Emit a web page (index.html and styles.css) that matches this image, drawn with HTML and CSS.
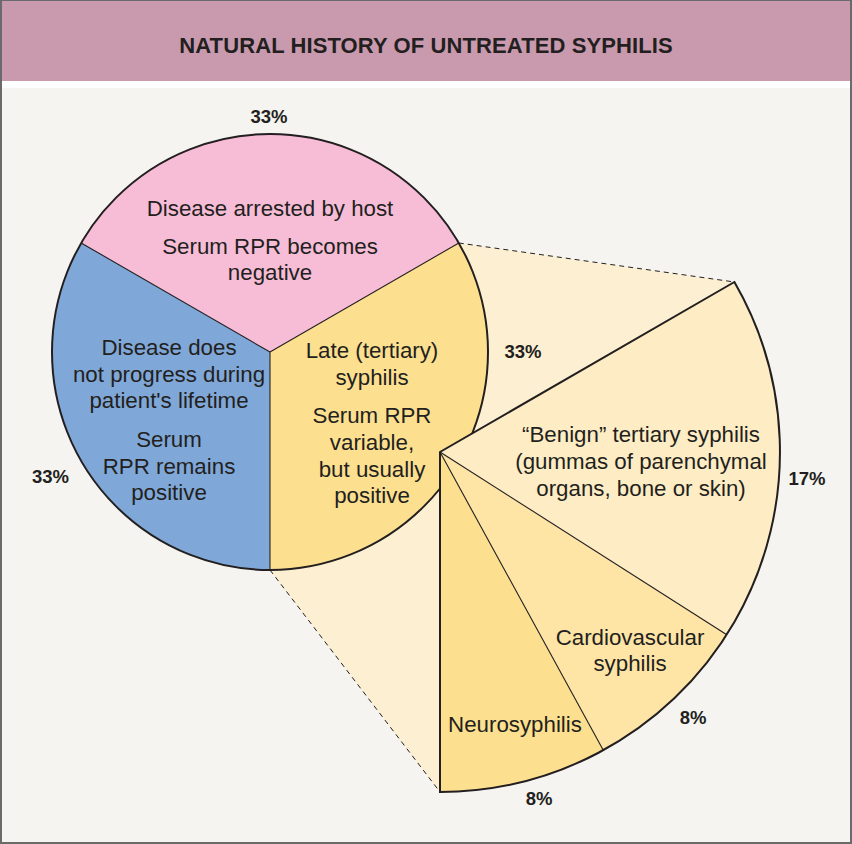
FILE: index.html
```html
<!DOCTYPE html>
<html lang="en">
<head>
<meta charset="utf-8">
<title>Natural history of untreated syphilis</title>
<link rel="stylesheet" href="styles.css">
</head>
<body>
<div class="figure">
  <header class="fig-header">
    <h1 class="fig-title">NATURAL HISTORY OF UNTREATED SYPHILIS</h1>
  </header>
  <div class="fig-gap"></div>
  <div class="fig-canvas">
    <svg class="chart" width="848" height="754" viewBox="2 88 848 754" xmlns="http://www.w3.org/2000/svg">
      <!-- projection shading -->
      <polygon class="proj" points="458.8,243 734.4,282 440,452 440,792 270,570"/>
      <line class="dash" x1="458.8" y1="243" x2="734.4" y2="282"/>
      <line class="dash" x1="270" y1="570" x2="440" y2="792"/>

      <!-- main pie -->
      <path class="s-pink" d="M270,352 L81.2,243 A218,218 0 0 1 458.8,243 Z"/>
      <path class="s-yellow" d="M270,352 L458.8,243 A218,218 0 0 1 270,570 Z"/>
      <path class="s-blue" d="M270,352 L270,570 A218,218 0 0 1 81.2,243 Z"/>
      <line class="thin" x1="270" y1="352" x2="81.2" y2="243"/>
      <line class="thin" x1="270" y1="352" x2="458.8" y2="243"/>
      <line class="thin" x1="270" y1="352" x2="270" y2="570"/>
      <circle class="outline" cx="270" cy="352" r="218"/>

      <!-- exploded sector -->
      <path class="s-benign" d="M440,452 L734.4,282 A340,340 0 0 1 726.8,634.7 Z"/>
      <path class="s-cardio" d="M440,452 L726.8,634.7 A340,340 0 0 1 603.3,750.2 Z"/>
      <path class="s-neuro" d="M440,452 L603.3,750.2 A340,340 0 0 1 440,792 Z"/>
      <line class="thin" x1="440" y1="452" x2="726.8" y2="634.7"/>
      <line class="thin" x1="440" y1="452" x2="603.3" y2="750.2"/>
      <path class="outline" d="M440,452 L734.4,282 A340,340 0 0 1 440,792 Z"/>

      <!-- labels -->
      <g class="lbl">
        <text x="270" y="216">Disease arrested by host</text>
        <text x="270" y="254">Serum RPR becomes</text>
        <text x="270" y="280">negative</text>

        <text x="169" y="355">Disease does</text>
        <text x="169" y="381.5">not progress during</text>
        <text x="169" y="408">patient's lifetime</text>
        <text x="169" y="446.5">Serum</text>
        <text x="169" y="473.5">RPR remains</text>
        <text x="169" y="500">positive</text>

        <text x="372" y="358">Late (tertiary)</text>
        <text x="372" y="385">syphilis</text>
        <text x="372" y="423">Serum RPR</text>
        <text x="372" y="450">variable,</text>
        <text x="372" y="476.5">but usually</text>
        <text x="372" y="503">positive</text>

        <text x="641" y="441.5">“Benign” tertiary syphilis</text>
        <text x="641" y="468.5">(gummas of parenchymal</text>
        <text x="641" y="495.5">organs, bone or skin)</text>

        <text x="630" y="645">Cardiovascular</text>
        <text x="630" y="671">syphilis</text>

        <text x="515" y="732">Neurosyphilis</text>
      </g>
      <g class="pct">
        <text x="269" y="123">33%</text>
        <text x="50.5" y="483">33%</text>
        <text x="523" y="357.5">33%</text>
        <text x="807" y="485">17%</text>
        <text x="693" y="724">8%</text>
        <text x="539" y="805">8%</text>
      </g>
    </svg>
  </div>
</div>
</body>
</html>
```
FILE: styles.css
```css
html, body {
  margin: 0;
  padding: 0;
  background: #ffffff;
}

.figure {
  box-sizing: border-box;
  width: 852px;
  height: 844px;
  border-style: solid;
  border-color: #6a6a6a;
  border-width: 1px 2px 2px 2px;
  display: flex;
  flex-direction: column;
  font-family: "Liberation Sans", Arial, Helvetica, sans-serif;
  color: #231f20;
}

.fig-header {
  box-sizing: border-box;
  height: 80px;
  padding-top: 33px;
  background: #c99aae;
  text-align: center;
}

.fig-title {
  margin: 0;
  font-size: 22px;
  line-height: 24px;
  font-weight: bold;
  letter-spacing: 0.1px;
  color: #231f20;
}

.fig-gap {
  height: 7px;
  background: #ffffff;
}

.fig-canvas {
  flex: 1;
  background: #f5f4f0;
  overflow: hidden;
}

.chart {
  display: block;
}

.proj { fill: #fdf0d2; }

.dash {
  stroke: #231f20;
  stroke-width: 1;
  stroke-dasharray: 5 4;
  fill: none;
}

.s-pink { fill: #f7bdd7; }
.s-yellow { fill: #fde08f; }
.s-blue { fill: #7fa8d8; }
.s-benign { fill: #feedc4; }
.s-cardio { fill: #fee5a6; }
.s-neuro { fill: #fde08f; }

.thin {
  stroke: #231f20;
  stroke-width: 1.1;
}

.outline {
  fill: none;
  stroke: #231f20;
  stroke-width: 2;
  stroke-linejoin: miter;
}

.lbl text {
  font-family: "Liberation Sans", Arial, Helvetica, sans-serif;
  font-size: 22.3px;
  fill: #231f20;
  text-anchor: middle;
}

.pct text {
  font-family: "Liberation Sans", Arial, Helvetica, sans-serif;
  font-size: 18.5px;
  font-weight: bold;
  fill: #231f20;
  text-anchor: middle;
}
```
